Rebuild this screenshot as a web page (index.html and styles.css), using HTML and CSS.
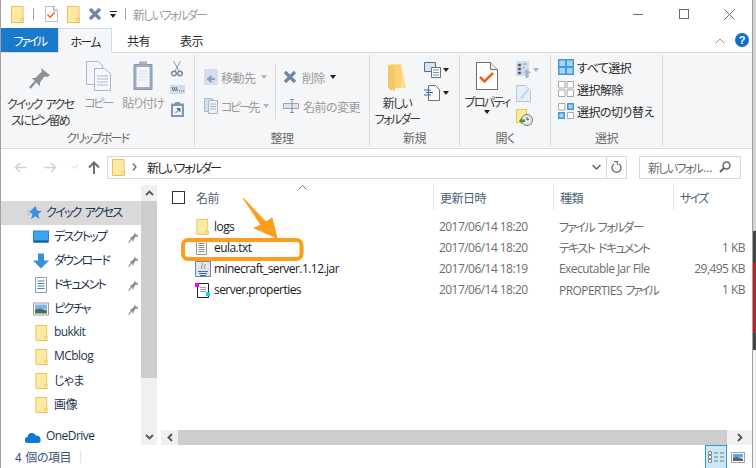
FILE: index.html
```html
<!DOCTYPE html>
<html lang="ja">
<head>
<meta charset="utf-8">
<title>新しいフォルダー</title>
<link rel="stylesheet" href="styles.css">
</head>
<body>
<svg class="defs" aria-hidden="true">
  <symbol id="folder" viewBox="0 0 13 17"><path d="M.5.500h11.500v16H.5z" fill="#ffe9a3" stroke="#eac352"/><path d="M10 16.500v-4h2.500v4z" fill="#fff3c8" stroke="#eac352"/></symbol>
  <symbol id="pin" viewBox="0 0 24 24"><path d="M13 1l10 8-3 2-3-1-5 7v4L3 12h4l7-7z" fill="#8a9196"/><path d="M7 16l-6 7" stroke="#8a9196" stroke-width="2.500"/></symbol>
  <symbol id="x" viewBox="0 0 14 14"><path d="M2 2l10 10M12 2L2 12" stroke="#6d87a8" stroke-width="3.200" fill="none"/></symbol>
  <symbol id="checkdoc" viewBox="0 0 22 28"><path d="M.5.500h14l7 7v20H.5z" fill="#fff" stroke="#6f6f6f"/><path d="M14.500.5v7h7" fill="#eee" stroke="#6f6f6f"/><path d="M4 15l4.500 4.500L17 11" fill="none" stroke="#f2601d" stroke-width="2.500"/></symbol>
  <symbol id="txt" viewBox="0 0 11 14"><path d="M.5.500h10v13H.5z" fill="#fff" stroke="#9a9a9a"/><path d="M2.500 2.500h6M2.500 4.500h6M2.500 6.500h6M2.500 8.500h6M2.500 10.500h6" stroke="#8d8d8d"/></symbol>
  <symbol id="grid" viewBox="0 0 16 16"><path d="M.5.500h6.500v6.500H.5zM9 .5h6.500v6.500H9zM.5 9H7v6.500H.5zM9 9h6.500v6.500H9z" fill="#fff" stroke="#a9a9a9"/></symbol>
</svg>

<div class="window">
  <header class="titlebar">
    <svg class="ti ti-first"><use href="#folder"/></svg>
    <span class="ti-sep"></span>
    <svg class="ti ti-doc" viewBox="0 0 22 28"><use href="#checkdoc"/></svg>
    <svg class="ti ti-folder"><use href="#folder"/></svg>
    <svg class="ti-x"><use href="#x"/></svg>
    <span class="ti-drop"></span>
    <span class="ti-sep ti-sep2"></span>
    <span class="title jp kana">新しいフォルダー</span>
    <div class="winctl">
      <span class="wc-min"></span>
      <span class="wc-max"></span>
      <svg class="wc-close" viewBox="0 0 11 11"><path d="M.5.500l10 10M10.500.500l-10 10" stroke="#6b6b6b" fill="none"/></svg>
    </div>
  </header>

  <nav class="tabs">
    <span class="tab tab-file jp tight">ファイル</span>
    <span class="tab tab-home jp kana">ホーム</span>
    <span class="tab tab-share jp">共有</span>
    <span class="tab tab-view jp">表示</span>
    <svg class="collapse" viewBox="0 0 10 6"><path d="M.5 5.500L5 1l4.500 4.500" fill="none" stroke="#9a9a9a"/></svg>
    <span class="help">?</span>
  </nav>

  <section class="ribbon">
    <div class="group g-clip">
      <div class="g-body">
        <div class="big b-pin"><svg class="ic-pin"><use href="#pin"/></svg><span class="jp kana">クイック アクセ<br>スにピン留め</span></div>
        <div class="big b-copy off"><svg class="ic-copy" viewBox="0 0 25 30"><path d="M.5.500h12l4 4v19H.5z" fill="#f2f5fa" stroke="#a8b7cc"/><path d="M8.500 7.500h10l6 5v17h-16z" fill="#f6f8fc" stroke="#a8b7cc"/><path d="M11 15h11M11 18h11M11 21h11M11 24h11" stroke="#a8b7cc"/></svg><span class="jp tight">コピー</span></div>
        <div class="big b-paste off"><svg class="ic-paste" viewBox="0 0 20 29"><path d="M1 3.500h18v25H1z" fill="#9bacc4" stroke="#8296b2"/><path d="M3.500 6h13v20h-13z" fill="#f4f6fa"/><path d="M6 3.500h8v-3H6z" fill="#a3b3c9"/><path d="M5.500 10h9M5.500 13h9M5.500 16h9M5.500 19h9" stroke="#dde3ec"/></svg><span class="jp mid">貼り付け</span></div>
        <div class="smalls">
          <svg class="ic-cut" viewBox="0 0 12 17"><path d="M2.500 1l5.500 10M9.500 1L4 11" stroke="#8a9db8" fill="none"/><circle cx="3" cy="13.500" r="2.300" fill="none" stroke="#74889f" stroke-width="1.400"/><circle cx="9" cy="13.500" r="2.300" fill="none" stroke="#74889f" stroke-width="1.400"/></svg>
          <svg class="ic-path" viewBox="0 0 15 9"><path d="M0 0h15v9H0z" fill="#d2dbe8"/><path d="M2 2l1.500 4M4 2l1.500 4M6 2l1.500 4M9 6h.8M11 6h.8M13 6h.8" stroke="#52667f"/></svg>
          <svg class="ic-short" viewBox="0 0 13 15"><path d="M0 1.500h13V15H0z" fill="#8296b2"/><path d="M4 0h5v3H4z" fill="#8296b2"/><path d="M2 4h9v9H2z" fill="#eef1f6"/><path d="M4.500 11L8 7.500M6 6.500h3v3z" stroke="#55697f" fill="#55697f"/></svg>
        </div>
      </div>
      <div class="g-label jp kana">クリップボード</div>
    </div>

    <div class="group g-org">
      <div class="g-body">
        <div class="org-col org-left off">
          <div class="row"><svg class="ic-s" viewBox="0 0 14 16"><path d="M0 0h14v16H0z" fill="#d5deea"/><path d="M11 10H5M7.500 7L4 10l3.500 3" stroke="#8ba0bb" stroke-width="2" fill="none"/></svg><span class="jp">移動先</span><i class="caret off"></i></div>
          <div class="row"><svg class="ic-s" viewBox="0 0 14 16"><path d="M.5.500h8v13h-8z" fill="#d5deea" stroke="#a8b7cc"/><path d="M4.500 2.500h9v13h-9z" fill="#eef2f7" stroke="#a8b7cc"/><path d="M6 6h6M6 8.500h6M6 11h6" stroke="#a8b7cc"/></svg><span class="jp tight">コピー先</span><i class="caret off"></i></div>
        </div>
        <span class="vsep"></span>
        <div class="org-col org-right off">
          <div class="row"><svg class="ic-del"><use href="#x"/></svg><span class="jp">削除</span><i class="caret on"></i></div>
          <div class="row"><svg class="ic-ren" viewBox="0 0 16 14"><path d="M.5 4.500h15v5H.5z" fill="#dfe5ee" stroke="#95a6bd"/><path d="M9 1v12M7 .5h4M7 13.500h4" stroke="#7a8ea8" fill="none"/></svg><span class="jp">名前の変更</span></div>
        </div>
      </div>
      <div class="g-label jp">整理</div>
    </div>

    <div class="group g-new">
      <div class="g-body">
        <div class="big b-newf"><svg class="ic-bigf" viewBox="0 0 19 27"><path d="M2 0h11l5 24H7l-5 3z" fill="#ffdf84"/><path d="M0 1h13v23l-6 0-5 3z" fill="#f9d276"/><path d="M0 1l7 4v22l-7-3z" fill="#f4c765"/></svg><span class="jp kana">新しい<br>フォルダー</span></div>
        <div class="smalls new-smalls">
          <div class="s-row"><svg class="ic-ni" viewBox="0 0 17 16"><path d="M.5.500h11v9H.5z" fill="#d8e6f4" stroke="#4f6f94"/><path d="M7.500 5.500h9v10h-9z" fill="#fff" stroke="#6f6f6f"/><path d="M9 8h6M9 10.500h6M9 13h6" stroke="#7a8ea8"/></svg><i class="caret on"></i></div>
          <div class="s-row"><svg class="ic-ni" viewBox="0 0 17 16"><path d="M4.500.500h7l4 4v11h-11z" fill="#fff" stroke="#6f6f6f"/><path d="M0 5h7M2 7.500h7M0 10h7" stroke="#2c62a6"/></svg><i class="caret on"></i></div>
        </div>
      </div>
      <div class="g-label jp">新規</div>
    </div>

    <div class="group g-open">
      <div class="g-body">
        <div class="big b-prop"><svg class="ic-check"><use href="#checkdoc"/></svg><span class="jp kana">プロパティ</span><i class="caret on"></i></div>
        <div class="smalls open-smalls">
          <div class="s-row"><svg class="ic-op" viewBox="0 0 15 17"><path d="M0 0h13v15H0z" fill="#d5deea"/><path d="M2 3h3v2H2zM2 7h3v2H2zM2 11h3v2H2zM7 3h4M7 7h2" stroke="#8a9db8"/><path d="M11 8l4 4h-2.500v5h-3v-5H7z" fill="#a3b5cc"/></svg><i class="caret off"></i></div>
          <svg class="ic-op" viewBox="0 0 15 17"><path d="M.5.500h9l5 5v11H.5z" fill="#e8eef6" stroke="#b7c5d8"/><path d="M4 13l7-9 2 1.500-7 9z" fill="#c9d6e6"/></svg>
          <svg class="ic-hist" viewBox="0 0 17 17"><path d="M.5.500h10v13H.5z" fill="#ffe9a3" stroke="#eac352"/><circle cx="11" cy="11" r="5.500" fill="#e6e6e6" stroke="#777"/><path d="M11 8v3l2-1" stroke="#555" fill="none"/><path d="M3 11.500l3-3v2h3v2.500H6v2z" fill="#2f9e3c"/></svg>
        </div>
      </div>
      <div class="g-label jp">開く</div>
    </div>

    <div class="group g-sel">
      <div class="g-body sel-list">
        <div class="row"><svg class="ic-sel" viewBox="0 0 16 16"><path d="M0 0h16v16H0z" fill="#3f9be8"/><path d="M1.500 1.500h5.500v5.500H1.500zM9 1.500h5.500v5.500H9zM1.500 9H7v5.500H1.500zM9 9h5.500v5.500H9z" fill="#a9d4f7"/></svg><span class="jp">すべて選択</span></div>
        <div class="row"><svg class="ic-sel"><use href="#grid"/></svg><span class="jp">選択解除</span></div>
        <div class="row"><svg class="ic-sel" viewBox="0 0 16 16"><path d="M.5.500h6.500v6.500H.5z" fill="#fff" stroke="#a9a9a9"/><path d="M9 0h7v7H9zM0 9h7v7H0z" fill="#3f9be8"/><path d="M10.500 1.500h4v4h-4zM1.500 10.500h4v4h-4z" fill="#a9d4f7"/><path d="M9.500 9.500h6v6h-6z" fill="#fff" stroke="#a9a9a9"/></svg><span class="jp">選択の切り替え</span></div>
      </div>
      <div class="g-label jp">選択</div>
    </div>
  </section>

  <div class="addr">
    <svg class="nav-back" viewBox="0 0 13 11"><path d="M12.500 5.500H1.500M6 1L1.500 5.500 6 10" fill="none" stroke="#d0d0d0" stroke-width="1.500"/></svg>
    <svg class="nav-fwd" viewBox="0 0 13 11"><path d="M.5 5.500h11M7 1l4.500 4.500L7 10" fill="none" stroke="#d0d0d0" stroke-width="1.500"/></svg>
    <svg class="nav-down" viewBox="0 0 7 4"><path d="M.5.500L3.500 3.500 6.500.5" fill="none" stroke="#d0d0d0"/></svg>
    <svg class="nav-up" viewBox="0 0 12 13"><path d="M6 13V2M1 6.500L6 1.500l5 5" fill="none" stroke="#6d6d6d" stroke-width="2"/></svg>
    <div class="pathbox">
      <svg class="path-f"><use href="#folder"/></svg>
      <svg class="path-sep" viewBox="0 0 5 8"><path d="M1 .5L4 4 1 7.500" fill="none" stroke="#666" stroke-width="1.200"/></svg>
      <span class="path-t jp kana">新しいフォルダー</span>
      <svg class="path-dd" viewBox="0 0 9 6"><path d="M.5 1L4.500 5 8.500 1" fill="none" stroke="#666" stroke-width="1.500"/></svg>
      <span class="path-rf"><svg viewBox="0 0 11 12"><path d="M3 3A4.500 4.500 0 1 0 8 3" fill="none" stroke="#777" stroke-width="1.500"/><path d="M2 .5h3.500V4" fill="none" stroke="#777" stroke-width="1.300" transform="translate(1 0)"/></svg></span>
    </div>
    <div class="searchbox">
      <span class="jp kana">新しいフォル</span><span class="dots">...</span>
      <svg viewBox="0 0 12 12"><circle cx="7.500" cy="4.500" r="3.500" fill="none" stroke="#666" stroke-width="1.500"/><path d="M5 7L1 11" stroke="#666" stroke-width="2"/></svg>
    </div>
  </div>

  <div class="main">
    <aside class="side">
      <div class="tree">
        <div class="n n0 active"><svg class="ic-star" viewBox="0 0 15 14"><path d="M8.500 0l1.700 4.800L15 5l-3.800 3 1.300 5L8.500 10.200 4 13l1.500-5L2.500 6z" fill="#3b8fdc"/><path d="M0 5h3M0 8h3" stroke="#86bdee"/></svg><span class="jp kana">クイック アクセス</span></div>
        <div class="n n1"><svg class="ic-n" viewBox="0 0 16 13"><path d="M0 0h16v12H0z" fill="#1f84dd"/><path d="M1 1h14v9H1z" fill="#3ea4ee"/><path d="M1 10h14v2H1z" fill="#0f5ea8"/></svg><span class="jp kana">デスクトップ</span><svg class="pin"><use href="#pin"/></svg></div>
        <div class="n n1"><svg class="ic-n" viewBox="0 0 16 15"><path d="M5 0h6v7h5l-8 8-8-8h5z" fill="#3a8fdc"/></svg><span class="jp kana">ダウンロード</span><svg class="pin"><use href="#pin"/></svg></div>
        <div class="n n1"><svg class="ic-n" viewBox="0 0 16 16"><path d="M2.500.500h11v15h-11z" fill="#fff" stroke="#9a9a9a"/><path d="M4.500 4h7M4.500 6.500h7M4.500 9h7M4.500 11.500h7" stroke="#3a7fc0"/></svg><span class="jp kana">ドキュメント</span><svg class="pin"><use href="#pin"/></svg></div>
        <div class="n n1"><svg class="ic-n" viewBox="0 0 16 13"><path d="M.5.500h15v12H.5z" fill="#fff" stroke="#9a9a9a"/><path d="M2 2h12v5H2z" fill="#7fb4e6"/><path d="M2 7l5-1 7 2v3H2z" fill="#46705c"/></svg><span class="jp kana">ピクチャ</span><svg class="pin"><use href="#pin"/></svg></div>
        <div class="n n1"><svg class="ic-fo"><use href="#folder"/></svg><span class="lat">bukkit</span></div>
        <div class="n n1"><svg class="ic-fo"><use href="#folder"/></svg><span class="lat">MCblog</span></div>
        <div class="n n1"><svg class="ic-fo"><use href="#folder"/></svg><span class="jp">じゃま</span></div>
        <div class="n n1"><svg class="ic-fo"><use href="#folder"/></svg><span class="jp">画像</span></div>
        <div class="n n0 od"><svg class="ic-cloud" viewBox="0 0 16 11"><path d="M3 11a3 3 0 0 1-.5-6A4.500 4.500 0 0 1 11 3.500 3.800 3.800 0 0 1 15.500 7 3 3 0 0 1 13.500 11z" fill="#0f78d4"/></svg><span class="lat">OneDrive</span></div>
      </div>
      <div class="vscroll">
        <span class="sb-btn"><svg viewBox="0 0 9 6"><path d="M1 5l3.500-3.500L8 5" fill="none" stroke="#555" stroke-width="1.800"/></svg></span>
        <span class="sb-thumb"></span>
        <span class="sb-track"></span>
        <span class="sb-btn"><svg viewBox="0 0 9 6"><path d="M1 1l3.500 3.500L8 1" fill="none" stroke="#555" stroke-width="1.800"/></svg></span>
      </div>
    </aside>

    <div class="content">
      <div class="list">
        <div class="cols">
          <span class="checkbox"></span>
          <span class="col c-name jp">名前</span>
          <span class="col c-date jp">更新日時</span>
          <span class="col c-type jp">種類</span>
          <span class="col c-size jp kana">サイズ</span>
          <svg class="sort" viewBox="0 0 9 5"><path d="M.5 4.500L4.500.5l4 4" fill="none" stroke="#777"/></svg>
        </div>
        <div class="files">
          <div class="file"><span class="f-name"><svg class="fi-f"><use href="#folder"/></svg><span class="lat nm">logs</span></span><span class="f-date lat">2017/06/14 18:20</span><span class="f-type jp kana">ファイル フォルダー</span><span class="f-size lat"></span></div>
          <div class="file"><span class="f-name"><svg class="fi-t"><use href="#txt"/></svg><span class="lat nm">eula.txt</span></span><span class="f-date lat">2017/06/14 18:20</span><span class="f-type jp kana">テキスト ドキュメント</span><span class="f-size lat">1 KB</span></div>
          <div class="file"><span class="f-name"><svg class="fi" viewBox="0 0 16 16"><path d="M.5.500h15v15H.5z" fill="#dce6f2" stroke="#6f86a6"/><path d="M7 2c2 2-2 3 0 6M10 3c1 2-2 3 0 5" stroke="#e0682a" fill="none"/><path d="M3 10.500h10M4 12.500h8M5 14.500h6" stroke="#3f6ea8"/></svg><span class="lat nm">minecraft_server.1.12.jar</span></span><span class="f-date lat">2017/06/14 18:19</span><span class="f-type lat">Executable Jar File</span><span class="f-size lat">29,495 KB</span></div>
          <div class="file"><span class="f-name"><svg class="fi" viewBox="0 0 16 16"><path d="M2.500 1.500h11v14h-11z" fill="#fff" stroke="#222"/><path d="M5 5.500h6M5 7.500h6M5 9.500h6" stroke="#8aa"/><path d="M0 1h4v4H0z" fill="#f0f"/><path d="M11 10h4v4h-4z" fill="#0de"/></svg><span class="lat nm">server.properties</span></span><span class="f-date lat">2017/06/14 18:20</span><span class="f-type"><span class="lat">PROPERTIES</span> <span class="jp tight">ファイル</span></span><span class="f-size lat">1 KB</span></div>
        </div>
      </div>
      <div class="hscroll">
        <span class="hs-btn hs-l"><svg viewBox="0 0 6 9"><path d="M5 1L1.500 4.500 5 8" fill="none" stroke="#555" stroke-width="1.800"/></svg></span>
        <span class="hs-thumb"></span>
        <span class="hs-btn hs-r"><svg viewBox="0 0 6 9"><path d="M1 1l3.500 3.500L1 8" fill="none" stroke="#555" stroke-width="1.800"/></svg></span>
      </div>
    </div>
  </div>

  <footer class="status">
    <span class="count jp">4 個の項目</span>
    <span class="st-sep"></span>
    <span class="view-d"><svg viewBox="0 0 16 13"><path d="M.5.500h3v3h-3zM.5 4.500h3v3h-3zM.5 8.500h3v3h-3z" fill="#fff" stroke="#888"/><path d="M6 2h4M12 2h4M6 6h4M12 6h4M6 10h4M12 10h4" stroke="#777"/></svg></span>
    <span class="view-t"><svg viewBox="0 0 14 11"><path d="M.5.500h13v10H.5z" fill="#fff" stroke="#a0a0a0"/><path d="M2 2h10v3.500H2z" fill="#5da4e8"/><path d="M2 5.500l4-.5 6 2v2H2z" fill="#4b6f63"/></svg></span>
  </footer>
</div>

<div class="desk" aria-hidden="true">
  <span class="d-a"></span>
  <span class="d-b"></span>
  <span class="d-c"></span>
  <span class="d-d"></span>
  <span class="d-e"></span>
</div>

<svg class="callout" viewBox="0 0 756 468" aria-hidden="true">
  <path d="M243 198L266 222 272 218 277 238 254 228 261 225z" fill="#ff9d1b" stroke="#ff9d1b" stroke-linejoin="round"/>
  <rect x="183" y="240" width="118.500" height="19" rx="5" fill="none" stroke="#ff9d1b" stroke-width="4"/>
</svg>
</body>
</html>
```
FILE: styles.css
```css
* { box-sizing: border-box; }
html, body { margin: 0; padding: 0; }
body {
  width: 756px; height: 468px; overflow: hidden; position: relative;
  display: flex;
  background: #fff;
  font-family: "Noto Sans", "Noto Sans CJK JP", sans-serif;
  font-size: 12px; color: #1e1e1e;
}
svg { display: block; flex: none; }
.defs { position: absolute; width: 0; height: 0; }
.jp { font-family: "Noto Sans CJK JP", sans-serif; font-feature-settings: "palt"; letter-spacing: -.5px; word-spacing: 2px; }
.jp.mid { letter-spacing: -1px; }
.jp.kana { letter-spacing: -1.7px; word-spacing: 3px; }
.jp.tight { letter-spacing: -2.3px; }
.lat { font-family: "Open Sans", "Noto Sans", sans-serif; letter-spacing: -.55px; }
i { display: block; font-style: normal; }

.window { width: 753px; height: 468px; flex: none; background: #fff; border-left: 1px solid #a0a0a0; border-right: 1px solid #a0a0a0; display: flex; flex-direction: column; }
.desk { width: 3px; height: 468px; flex: none; display: flex; flex-direction: column; }
.d-a { height: 231px; background: #d4d4d4; }
.d-b { height: 31px; background: #444; }
.d-c { height: 71px; background: #b8202f; }
.d-d { height: 17px; background: #444; }
.d-e { flex: 1; background: #f4f4f4; }

/* title */
.titlebar { height: 28px; display: flex; align-items: center; padding-left: 10px; flex: none; }
.ti { width: 13px; height: 17px; }
.ti-sep { width: 1px; height: 12px; background: #a5a5a5; margin-left: 9px; }
.ti-doc { width: 13px; height: 16px; margin-left: 11px; }
.ti-folder { margin-left: 9px; }
.ti-x { width: 14px; height: 14px; margin-left: 8px; }
.ti-drop { width: 7px; height: 7px; margin-left: 8px; border-top: 1px solid #222; position: relative; }
.ti-drop::after { content: ""; position: absolute; left: 0; top: 2px; border: 3.500px solid transparent; border-top: 4px solid #222; border-bottom: 0; }
.ti-sep2 { margin-left: 8px; }
.title { margin-left: 7px; color: #9b9b9b; font-size: 12px; }
.winctl { margin-left: auto; display: flex; align-items: center; padding-right: 17px; }
.wc-min { width: 10px; height: 1px; background: #6b6b6b; }
.wc-max { width: 10px; height: 10px; border: 1px solid #6b6b6b; margin-left: 36px; }
.wc-close { width: 11px; height: 11px; margin-left: 35px; }

/* tabs */
.tabs { height: 25px; flex: none; display: flex; align-items: stretch; border-bottom: 1px solid #dadbdc; position: relative; }
.tab { display: flex; align-items: center; justify-content: center; font-size: 12px; color: #2b2b2b; }
.tab-file { width: 57px; background: #1979ca; color: #fff; }
.tab-home { width: 54px; background: #f5f6f7; border: 1px solid #dadbdc; border-bottom: 0; margin-bottom: -1px; }
.tab-share { width: 53px; }
.tab-view { width: 53px; }
.collapse { width: 10px; height: 6px; margin: 10px 0 0 auto; }
.help { width: 14px; height: 14px; border-radius: 50%; background: #0f6fc6; color: #fff; font: bold 11px/14px "Liberation Sans", sans-serif; text-align: center; margin: 5px 3px 0 10px; }

/* ribbon */
.ribbon { height: 96px; flex: none; display: flex; background: #f5f6f7; border-bottom: 1px solid #dadbdc; color: #3a3a3a; padding-top: 2px; }
.group { height: 91px; border-right: 1px solid #dadbdc; display: flex; flex-direction: column; flex: none; }
.g-body { height: 73px; display: flex; flex: none; }
.g-label { text-align: center; color: #6a6a6a; line-height: 20px; font-size: 12px; }
.g-clip { width: 194px; }
.g-org { width: 175px; }
.g-new { width: 90px; }
.g-open { width: 91px; }
.g-sel { width: 112px; }
.big { display: flex; flex-direction: column; align-items: center; text-align: center; line-height: 16px; }
.off { color: #9a9a9a; }
.b-pin { width: 78px; }
.ic-pin { width: 22px; height: 22px; margin: 12px 0 7px; }
.b-copy { width: 34px; margin-left: 2px; }
.ic-copy { width: 25px; height: 30px; margin: 6px 0 4px; }
.b-paste { width: 50px; margin-left: 3px; }
.ic-paste { width: 20px; height: 29px; margin: 6px 0 5px; }
.smalls { display: flex; flex-direction: column; align-items: center; }
.g-clip .smalls { width: 18px; padding-top: 5px; }
.ic-cut { width: 12px; height: 17px; }
.ic-path { width: 15px; height: 9px; margin-top: 8px; }
.ic-short { width: 13px; height: 15px; margin-top: 8px; }
.row { display: flex; align-items: center; height: 22px; white-space: nowrap; }
.org-col { display: flex; flex-direction: column; padding-top: 11px; gap: 7px; }
.org-left { width: 80px; padding-left: 9px; }
.ic-s { width: 14px; height: 16px; margin-right: 3px; }
.caret { width: 0; height: 0; border: 3.500px solid transparent; border-top: 4px solid #222; border-bottom: 0; flex: none; }
.caret.off { border-top-color: #b5b5b5; }
.row .caret { margin-left: 5px; }
.vsep { width: 1px; height: 55px; background: #dadbdc; margin-top: 9px; }
.org-right { margin-left: 7px; }
.ic-del { width: 14px; height: 14px; margin-right: 5px; }
.ic-ren { width: 16px; height: 14px; margin-right: 4px; }
.b-newf { width: 54px; }
.ic-bigf { width: 19px; height: 27px; margin: 9px 0 4px; }
.new-smalls { padding-top: 7px; gap: 7px; align-items: flex-start; }
.s-row { display: flex; align-items: center; gap: 2px; }
.ic-ni { width: 17px; height: 16px; }
.b-prop { width: 54px; }
.ic-check { width: 22px; height: 28px; margin: 7px 0 4px; }
.open-smalls { align-items: flex-start; padding-top: 6px; gap: 7px; margin-left: 2px; }
.ic-op { width: 15px; height: 17px; }
.ic-hist { width: 17px; height: 17px; }
.sel-list { flex-direction: column; padding: 1px 0 0 7px; color: #2b2b2b; }
.ic-sel { width: 16px; height: 16px; margin-right: 3px; }

/* address */
.addr { height: 36px; flex: none; display: flex; align-items: center; padding: 0 11px 0 13px; }
.nav-back { width: 13px; height: 11px; }
.nav-fwd { width: 13px; height: 11px; margin-left: 17px; }
.nav-down { width: 7px; height: 4px; margin-left: 14px; }
.nav-up { width: 12px; height: 13px; margin-left: 10px; }
.pathbox { width: 520px; height: 23px; margin-left: 7px; border: 1px solid #d9d9d9; display: flex; align-items: center; padding-left: 4px; background: #fff; }
.path-f { width: 13px; height: 17px; }
.path-sep { width: 5px; height: 8px; margin-left: 7px; }
.path-t { margin-left: 10px; font-size: 12px; color: #222; }
.path-dd { width: 9px; height: 6px; margin-left: auto; }
.path-rf { width: 20px; height: 21px; margin-left: 5px; border-left: 1px solid #d9d9d9; display: flex; align-items: center; justify-content: center; }
.path-rf svg { width: 11px; height: 12px; }
.searchbox { width: 102px; height: 23px; margin-left: 12px; border: 1px solid #d9d9d9; display: flex; align-items: center; padding-left: 8px; color: #6d6d6d; white-space: nowrap; }
.dots { font-family: "Open Sans", sans-serif; margin-left: 1px; }
.searchbox svg { width: 12px; height: 12px; margin-left: auto; margin-right: 9px; }

/* main */
.main { height: 260px; flex: none; display: flex; }
.side { width: 156px; height: 260px; display: flex; flex: none; }
.tree { width: 140px; height: 260px; padding-top: 16px; overflow: hidden; color: #1e3350; }
.n { height: 24px; display: flex; align-items: center; position: relative; white-space: nowrap; }
.n span { line-height: 16px; position: relative; top: -1px; }
.n0 { padding-left: 26px; }
.n0 span { margin-left: 4px; }
.n1 { padding-left: 32px; }
.n1 span { margin-left: 5px; }
.active { background: #d9d9d9; }
.od { margin-top: 8px; padding-left: 24px; }
.od span { margin-left: 5px; }
.ic-star { width: 15px; height: 14px; }
.ic-n { width: 16px; height: 16px; }
.ic-fo { width: 13px; height: 16px; margin-left: 2px; }
.n1 .ic-fo + span { margin-left: 6px; }
.pin { width: 11px; height: 11px; position: absolute; left: 127px; top: 7px; }
.ic-cloud { width: 16px; height: 11px; }
.vscroll { width: 16px; height: 260px; display: flex; flex-direction: column; background: #f0f0f0; flex: none; }
.sb-btn { height: 16px; flex: none; display: flex; align-items: center; justify-content: center; }
.sb-btn svg { width: 9px; height: 6px; }
.sb-thumb { height: 177px; background: #cdcdcd; flex: none; }
.sb-track { flex: 1; }

.content { width: 595px; height: 260px; padding-left: 4px; display: flex; flex-direction: column; flex: none; }
.list { height: 245px; flex: none; }
.cols { height: 25px; position: relative; display: flex; align-items: center; color: #4c607a; }
.checkbox { width: 13px; height: 13px; border: 1px solid #333; margin-left: 11px; flex: none; background: #fff; }
.col { display: block; height: 25px; line-height: 25px; flex: none; }
.c-name { width: 237px; margin-left: 11px; }
.c-date, .c-type, .c-size { width: 120px; border-left: 1px solid #e5e5e5; padding-left: 6px; }
.c-size { width: 76px; }
.sort { width: 9px; height: 5px; position: absolute; left: 137px; top: 0; }
.files { padding-top: 6px; }
.file { height: 21px; display: flex; align-items: center; white-space: nowrap; color: #6d6d6d; }
.f-name { width: 278px; padding-left: 35px; display: flex; align-items: center; color: #1e1e1e; flex: none; }
.fi { width: 16px; height: 16px; margin-left: -1px; margin-right: 3px; }
.fi-t { width: 11px; height: 14px; margin-right: 7px; }
.fi-f { width: 13px; height: 16px; margin-right: 5px; }
.nm { color: #1a1a1a; }
.f-date { width: 120px; flex: none; }
.f-type { width: 120px; flex: none; }
.f-size { width: 66px; text-align: right; flex: none; }
.hscroll { height: 15px; display: flex; flex: none; background: #f0f0f0; }
.hs-btn { display: flex; align-items: center; justify-content: center; flex: none; }
.hs-btn svg { width: 6px; height: 9px; }
.hs-l { width: 17px; }
.hs-r { width: 25px; }
.hs-thumb { flex: 1; background: #cdcdcd; }

/* status */
.status { flex: 1; display: flex; align-items: stretch; background: #fff; color: #3c5478; }
.count { width: 79px; padding-left: 14px; line-height: 24px; white-space: nowrap; }
.st-sep { width: 1px; height: 13px; background: #e5e5e5; margin-top: 5px; }
.view-d { width: 22px; margin-left: 624px; background: #cce8f8; border: 1px solid #26a0da; border-bottom: 0; display: flex; align-items: center; justify-content: center; }
.view-d svg { width: 16px; height: 13px; }
.view-t { width: 14px; margin-left: 4px; display: flex; align-items: center; }
.view-t svg { width: 14px; height: 11px; }

.callout { position: absolute; left: 0; top: 0; width: 756px; height: 468px; pointer-events: none; }
```
